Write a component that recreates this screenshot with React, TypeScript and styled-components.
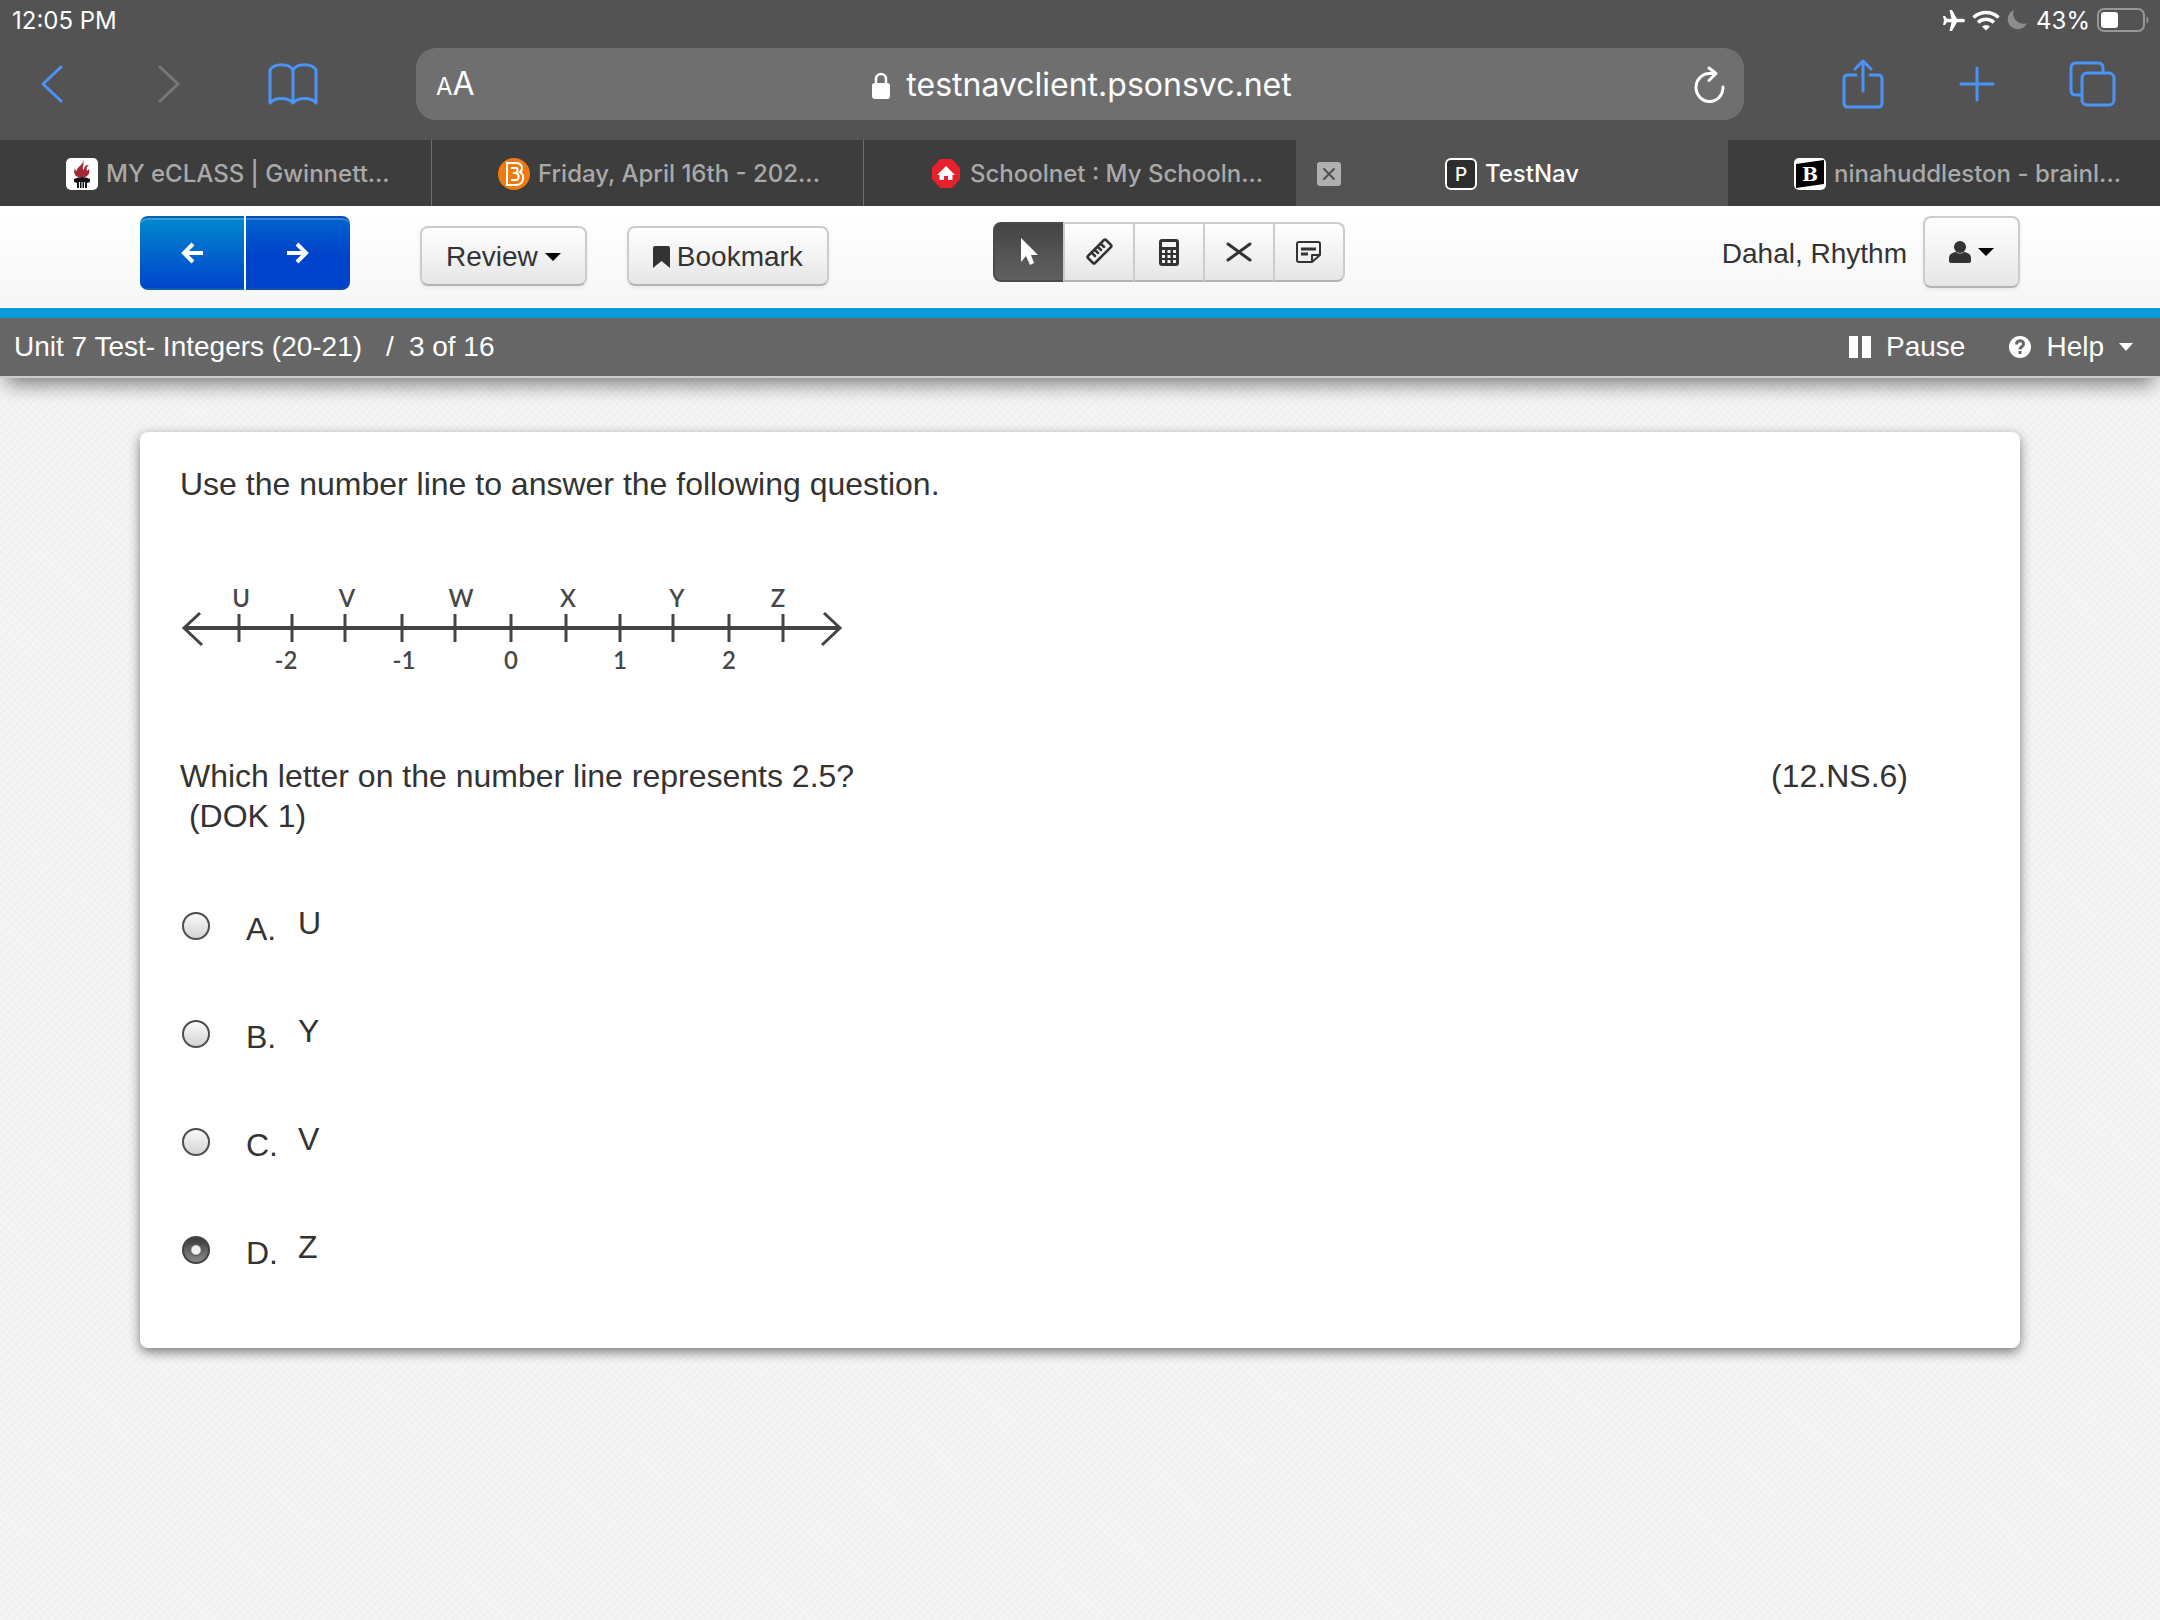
import React from "react";
import styled, { createGlobalStyle, css } from "styled-components";

const sans = `"Liberation Sans", Arial, sans-serif`;
const system = `Inter, "Liberation Sans", sans-serif`;

const GlobalStyle = createGlobalStyle`
  *, *::before, *::after { box-sizing: border-box; }
  body { margin: 0; background: #f5f5f5; font-family: ${sans}; color: #333; }
  button { font: inherit; color: inherit; margin: 0; padding: 0; border: 0; background: none; cursor: pointer; }
  svg { display: block; flex: none; }
`;

const Page = styled.div`
  min-height: 100vh;
  display: flex;
  flex-direction: column;
`;

/* ---------- browser chrome ---------- */

const Chrome = styled.header`
  background: #535353;
  color: #fff;
  font-family: ${system};
`;

const StatusBar = styled.div`
  height: 40px;
  padding: 0 10px 0 12px;
  display: flex;
  align-items: center;
  justify-content: space-between;
  font-size: 24px;
`;

const StatusIcons = styled.div`
  display: flex;
  align-items: center;
  gap: 7px;
`;

const AddressRow = styled.div`
  height: 100px;
  padding-top: 8px;
  display: flex;
  align-items: flex-start;
`;

const ToolSide = styled.div<{ $end?: boolean }>`
  width: 416px;
  height: 72px;
  flex: none;
  display: flex;
  align-items: center;
  justify-content: space-between;
  padding: ${(p) => (p.$end ? "0 44px 0 98px" : "0 98px 0 39px")};
`;

const ChromeButton = styled.button<{ $muted?: boolean }>`
  color: ${(p) => (p.$muted ? "#777" : "#4a94f7")};
`;

const AddressBar = styled.div`
  flex: 1;
  min-width: 0;
  height: 72px;
  padding: 2px 18px 0 20px;
  border-radius: 20px;
  background: #6f6f6f;
  display: grid;
  grid-template-columns: 1fr auto 1fr;
  align-items: center;
`;

const TextSize = styled.button`
  justify-self: start;
  font-size: 32px;
  line-height: 40px;
`;

const SmallA = styled.span`
  font-size: 24px;
`;

const Url = styled.div`
  display: flex;
  align-items: center;
  gap: 16px;
  padding-left: 2px;
  font-size: 32px;
  line-height: 40px;
`;

const Reload = styled.button`
  justify-self: end;
`;

const TabBar = styled.nav`
  display: grid;
  grid-template-columns: repeat(5, 1fr);
  height: 66px;
`;

const Tab = styled.div<{ $active?: boolean; $divider?: boolean }>`
  min-width: 0;
  display: grid;
  grid-template-columns: 66px 1fr ${(p) => (p.$active ? "66px" : "20px")};
  align-items: center;
  padding-top: 2px;
  background: ${(p) => (p.$active ? "#535353" : "#3d3d3d")};
  border-right: ${(p) => (p.$divider ? "1px solid #6e6e6e" : "0")};
`;

const TabLink = styled.a<{ $active?: boolean }>`
  grid-column: 2;
  min-width: 0;
  display: flex;
  align-items: center;
  justify-content: ${(p) => (p.$active ? "center" : "flex-start")};
  gap: 8px;
  color: ${(p) => (p.$active ? "#fff" : "#a9a9a9")};
  font-size: 24px;
  font-weight: 500;
  line-height: 32px;
  white-space: nowrap;
  text-decoration: none;
`;

const CloseTab = styled.button`
  grid-row: 1;
  grid-column: 1;
  margin-left: 21px;
  width: 24px;
  height: 24px;
  border-radius: 3px;
  background: #b0b0b0;
  color: #505050;
  display: grid;
  place-items: center;
`;

/* ---------- test toolbar ---------- */

const TestHeader = styled.div`
  height: 102px;
  padding: 0 140px;
  display: flex;
  align-items: flex-start;
  background: linear-gradient(#fff 0%, #fefefe 20%, #f6f6f6 97%, #fff 98%);
  font-size: 28px;
  line-height: 36px;
`;

const ButtonGroup = styled.div<{ $top: number; $left?: number }>`
  display: flex;
  margin-top: ${(p) => p.$top}px;
  margin-left: ${(p) => p.$left ?? 0}px;
`;

const NavButton = styled.button<{ $next?: boolean }>`
  width: 104px;
  height: 74px;
  display: grid;
  place-items: center;
  color: #fff;
  border: solid ${(p) => (p.$next ? "#0a4fb0" : "#0a62ae")};
  border-width: 2px 0;
  box-shadow: inset 0 2px 0 rgba(255, 255, 255, 0.2);
  ${(p) =>
    p.$next
      ? css`
          margin-left: 2px;
          border-radius: 0 8px 8px 0;
          background: linear-gradient(#0064cd, #04c 50%);
        `
      : css`
          border-radius: 8px 0 0 8px;
          background: linear-gradient(#08c, #04c);
        `}
`;

const raised = css`
  border: 2px solid #ccc;
  border-bottom-color: #b3b3b3;
  background: linear-gradient(#fff, #e6e6e6);
`;

const PlainButton = styled.button<{ $tall?: boolean }>`
  ${raised}
  height: ${(p) => (p.$tall ? 72 : 60)}px;
  padding: ${(p) => (p.$tall ? "0 24px" : "2px 24px 0")};
  border-radius: 8px;
  box-shadow: 0 2px 4px rgba(0, 0, 0, 0.06);
  display: flex;
  align-items: center;
  gap: 7px;
`;

const Tools = styled.div`
  display: flex;
  margin: 16px 0 0 164px;
`;

const ToolButton = styled.button<{ $on?: boolean }>`
  ${raised}
  width: 72px;
  height: 60px;
  margin-right: -2px;
  display: grid;
  place-items: center;
  &:first-child { border-radius: 8px 0 0 8px; }
  &:last-child { border-radius: 0 8px 8px 0; margin-right: 0; }
  ${(p) =>
    p.$on &&
    css`
      background: linear-gradient(#444, #606060);
      border-color: #4a4a4a;
      color: #fff;
    `}
`;

const Account = styled.div`
  margin: 10px 0 0 auto;
  display: flex;
  align-items: center;
  gap: 16px;
`;

const UserName = styled.span`
  padding-top: 4px;
`;

const Caret = styled.span<{ $small?: boolean }>`
  width: 0;
  height: 0;
  border: solid transparent;
  border-width: ${(p) => (p.$small ? "8px 7px 0" : "8px 8px 0")};
  border-top-color: ${(p) => (p.$small ? "#fff" : "#000")};
`;

const InfoBar = styled.div`
  position: relative;
  display: flex;
  align-items: center;
  justify-content: space-between;
  height: 70px;
  padding: 0 27px 0 14px;
  border-top: 10px solid #0b9bdc;
  border-bottom: 2px solid #ccc;
  background: #666;
  color: #fff;
  font-size: 28px;
  line-height: 36px;
  box-shadow: 0 12px 20px -6px rgba(0, 0, 0, 0.5);
`;

const Crumbs = styled.div`
  display: flex;
  gap: 14px;
`;

const Position = styled.span`
  &::before { content: "/"; margin: 0 15px 0 10px; }
`;

const InfoActions = styled.div`
  display: flex;
  gap: 44px;
`;

const InfoButton = styled.button`
  display: flex;
  align-items: center;
  gap: 15px;
`;

/* ---------- question ---------- */

const Canvas = styled.main`
  flex: 1;
  padding: 54px 140px;
  background-color: #f5f5f5;
  background-image:
    repeating-linear-gradient(45deg, rgba(0, 0, 0, 0.01) 0 2px, transparent 2px 5px),
    repeating-linear-gradient(-45deg, rgba(0, 0, 0, 0.01) 0 2px, transparent 2px 6px);
`;

const Card = styled.section`
  padding: 32px 112px 44px 40px;
  border-radius: 8px;
  background: #fff;
  box-shadow: 0 4px 12px rgba(0, 0, 0, 0.5);
  font-size: 32px;
  line-height: 40px;
`;

const Text = styled.p`
  margin: 0;
`;

const Figure = styled.figure`
  margin: 74px 0;
`;

const FigureLabel = styled.text`
  font-family: Lato, "Open Sans", sans-serif;
  font-size: 24px;
  font-weight: 600;
  fill: #484848;
  text-anchor: middle;
`;

const Prompt = styled.div`
  display: flex;
  justify-content: space-between;
  white-space: pre-wrap;
`;

const Options = styled.div`
  margin-top: 36px;
`;

const Option = styled.label`
  height: 108px;
  padding-left: 2px;
  display: grid;
  grid-template-columns: 64px 52px auto;
  align-items: center;
  justify-content: start;
`;

const Radio = styled.input`
  appearance: none;
  width: 28px;
  height: 28px;
  margin: 0;
  border: 2px solid #4d4d4d;
  border-radius: 50%;
  background: linear-gradient(#fafafa, #d4d4d4);
  &:checked {
    border-color: #444;
    background: radial-gradient(circle, #f0f0f0 4px, #333 6px, transparent 6px),
      linear-gradient(#3a3a3a, #8a8a8a);
  }
`;

const OptionKey = styled.span`
  padding-top: 6px;
`;

const OptionText = styled.span`
  padding-bottom: 6px;
`;

/* ---------- drawings ---------- */

const line = { fill: "none", stroke: "currentColor", strokeLinecap: "round", strokeLinejoin: "round" } as const;

const Favicon = ({ kind }: { kind: string }) => (
  <svg width="32" height="32" viewBox="0 0 32 32" aria-hidden="true">
    {kind === "torch" && (
      <>
        <rect width="32" height="32" rx="5" fill="#fff" />
        <path d="M17 2c1 5-7 7-6 11-2-1-2-2-2-3-2 5 0 9 4 9h6c4-1 5-5 4-8l-2 2c-1-3 0-5 2-6-4 0-5 2-5 5-3-2 1-6-1-10z" fill="#a32a35" />
        <path d="M8 21q8-4 16 0v3l-3 1v5h-2l-1-4h-4l-1 4h-2v-5l-3-1z" fill="#151515" />
        <path d="M14 24v6h4v-6z" fill="#151515" />
        <path d="M13.500 24v6M16 24v6M18.500 24v6" stroke="#fff" strokeWidth="1" />
      </>
    )}
    {kind === "blog" && (
      <>
        <circle cx="16" cy="16" r="16" fill="#ef7a12" />
        <path d="M9 5h9c7 0 7 7 4 9 5 3 4 13-4 13H9z" fill="none" stroke="#fff" strokeWidth="2" />
        <path d="M13 10h5c2 0 2 4 0 5h-3M15 15h3c4 1 3 7 0 7h-5" fill="none" stroke="#fff" strokeWidth="2" />
      </>
    )}
    {kind === "home" && (
      <>
        <path d="M10 1h12l8 9v11l-8 9H10l-8-9V10z" fill="#e8202b" />
        <path d="M16 8l9 9h-2.500v5h-4.500v-4h-4v4H9.500v-5H7z" fill="#fff" />
      </>
    )}
    {kind === "p" && (
      <>
        <rect x="1" y="1" width="30" height="30" rx="5" fill="#2d2d2d" stroke="#fff" strokeWidth="2" />
        <text x="16" y="23" textAnchor="middle" fontSize="19" fill="#fff">P</text>
      </>
    )}
    {kind === "b" && (
      <>
        <rect width="32" height="32" rx="5" fill="#fff" />
        <path d="M2 6L30 2v24L2 30z" fill="#000" />
        <text x="16" y="23" textAnchor="middle" fontSize="19" fontWeight="bold" fontFamily="DejaVu Serif, serif" fill="#fff">B</text>
      </>
    )}
  </svg>
);

const letters: [string, number][] = [["U", 61], ["V", 167], ["W", 281], ["X", 388], ["Y", 497], ["Z", 598]];
const numbers: [string, number][] = [["-2", 106], ["-1", 224], ["0", 331], ["1", 440], ["2", 549]];
const ticks = [59, 112, 165, 222, 275, 331, 386, 440, 493, 549, 603];

const NumberLine = () => (
  <svg width="664" height="104" viewBox="0 0 664 104" role="img" aria-label="Number line">
    <g fill="none" stroke="#444" strokeWidth="3">
      <path d="M4 50H660" strokeWidth="4" />
      <path d="M20 35L4 50L22 67M644 35L660 50L642 67" />
      {ticks.map((x) => (
        <path key={x} d={`M${x} 36V64`} />
      ))}
    </g>
    {letters.map(([t, x]) => (
      <FigureLabel key={t} x={x} y={29}>{t}</FigureLabel>
    ))}
    {numbers.map(([t, x]) => (
      <FigureLabel key={t} x={x} y={91}>{t}</FigureLabel>
    ))}
  </svg>
);

const tabs = [
  { icon: "torch", label: "MY eCLASS | Gwinnett...", divider: true },
  { icon: "blog", label: "Friday, April 16th - 202...", divider: true },
  { icon: "home", label: "Schoolnet : My Schooln..." },
  { icon: "p", label: "TestNav", active: true },
  { icon: "b", label: "ninahuddleston - brainl..." },
];

const options = [
  { key: "A.", text: "U" },
  { key: "B.", text: "Y" },
  { key: "C.", text: "V" },
  { key: "D.", text: "Z" },
];

export default function App() {
  return (
    <Page>
      <GlobalStyle />
      <Chrome>
        <StatusBar>
          <span>12:05 PM</span>
          <StatusIcons>
            <svg width="23" height="21" viewBox="0 0 23 21" fill="#fff">
              <path d="M23 10.500c0 1-1 1.800-2 1.800h-6L10 21H7.500l2-8.700H5L3 15H1l1-4.500L1 6h2l2 2.700h4.500L7.500 0H10l5 8.700h6c1 0 2 .800 2 1.800z" />
            </svg>
            <svg width="28" height="21" viewBox="0 0 28 21" fill="none" stroke="#fff" strokeWidth="3.500">
              <path d="M1.500 7.500a18 18 0 0 1 25 0M6 12.500a11.500 11.500 0 0 1 16 0" />
              <path d="M14 20.500l-4-4a6 6 0 0 1 8 0z" fill="#fff" stroke="none" />
            </svg>
            <svg width="22" height="20" viewBox="0 0 22 20" fill="#8c8c8c">
              <path d="M7 0a10 10 0 0 0 13 13A10 10 0 1 1 7 0z" />
            </svg>
            <span>43%</span>
            <svg width="53" height="24" viewBox="0 0 53 24">
              <rect x="1" y="1" width="46" height="22" rx="6" fill="none" stroke="#979797" strokeWidth="2" />
              <rect x="4" y="4" width="17" height="16" rx="3" fill="#fff" />
              <path d="M49.500 8q4 4 0 8z" fill="#979797" />
            </svg>
          </StatusIcons>
        </StatusBar>
        <AddressRow>
          <ToolSide>
            <ChromeButton aria-label="Back">
              <svg width="24" height="40" viewBox="0 0 24 40" {...line} strokeWidth="3"><path d="M22 3L4 20l18 17" /></svg>
            </ChromeButton>
            <ChromeButton aria-label="Forward" $muted>
              <svg width="28" height="40" viewBox="0 0 28 40" {...line} strokeWidth="3"><path d="M8 3l18 17L8 37" /></svg>
            </ChromeButton>
            <ChromeButton aria-label="Bookmarks">
              <svg width="50" height="42" viewBox="0 0 50 42" {...line} strokeWidth="3">
                <path d="M25 40V7C21 0 6 0 2 7v33c5-6 18-6 23 0 5-6 18-6 23 0V7c-4-7-19-7-23 0" />
              </svg>
            </ChromeButton>
          </ToolSide>
          <AddressBar>
            <TextSize aria-label="Page settings"><SmallA>A</SmallA>A</TextSize>
            <Url>
              <svg width="18" height="27" viewBox="0 0 18 27">
                <rect y="11" width="18" height="16" rx="3" fill="#fff" />
                <path d="M4 12V7a5 5 0 0 1 10 0v5" fill="none" stroke="#fff" strokeWidth="2.500" />
              </svg>
              <span>testnavclient.psonsvc.net</span>
            </Url>
            <Reload aria-label="Reload">
              <svg width="32" height="38" viewBox="0 0 32 38" {...line} strokeWidth="3">
                <path d="M29 21A13.500 14 0 1 1 16 7.500h6M15 2l7 5.500-7 7" />
              </svg>
            </Reload>
          </AddressBar>
          <ToolSide $end>
            <ChromeButton aria-label="Share">
              <svg width="42" height="50" viewBox="0 0 42 50" {...line} strokeWidth="3">
                <path d="M14 16H6q-4 0-4 4v24q0 4 4 4h30q4 0 4-4V20q0-4-4-4h-8M21 32V2M13 10l8-8 8 8" />
              </svg>
            </ChromeButton>
            <ChromeButton aria-label="New tab">
              <svg width="36" height="36" viewBox="0 0 36 36" {...line} strokeWidth="3"><path d="M18 2v32M2 18h32" /></svg>
            </ChromeButton>
            <ChromeButton aria-label="All tabs">
              <svg width="47" height="46" viewBox="0 0 47 46" {...line} strokeWidth="3">
                <rect x="13" y="12" width="32" height="32" rx="5" />
                <path d="M12 34H7q-5 0-5-5V7q0-5 5-5h22q5 0 5 5v4" />
              </svg>
            </ChromeButton>
          </ToolSide>
        </AddressRow>
        <TabBar>
          {tabs.map((t) => (
            <Tab key={t.label} $active={t.active} $divider={t.divider}>
              {t.active && (
                <CloseTab aria-label="Close tab">
                  <svg width="14" height="14" viewBox="0 0 14 14" {...line} strokeWidth="2"><path d="M2 2l10 10M12 2L2 12" /></svg>
                </CloseTab>
              )}
              <TabLink href="#" $active={t.active}>
                <Favicon kind={t.icon} />
                {t.label}
              </TabLink>
            </Tab>
          ))}
        </TabBar>
      </Chrome>

      <TestHeader>
        <ButtonGroup $top={10}>
          <NavButton aria-label="Previous question">
            <svg width="22" height="22" viewBox="0 0 22 22" {...line} strokeLinecap="butt" strokeLinejoin="miter" strokeWidth="4"><path d="M12 2l-9 9 9 9M3 11h19" /></svg>
          </NavButton>
          <NavButton aria-label="Next question" $next>
            <svg width="22" height="22" viewBox="0 0 22 22" {...line} strokeLinecap="butt" strokeLinejoin="miter" strokeWidth="4"><path d="M10 2l9 9-9 9M19 11H0" /></svg>
          </NavButton>
        </ButtonGroup>
        <ButtonGroup $top={20} $left={70}>
          <PlainButton>Review<Caret /></PlainButton>
        </ButtonGroup>
        <ButtonGroup $top={20} $left={40}>
          <PlainButton>
            <svg width="17" height="22" viewBox="0 0 17 22" fill="#333"><path d="M0 2q0-2 2-2h13q2 0 2 2v20l-8.500-7L0 22z" /></svg>
            Bookmark
          </PlainButton>
        </ButtonGroup>
        <Tools>
          <ToolButton $on aria-label="Pointer">
            <svg width="18" height="28" viewBox="0 0 18 28" fill="#fff"><path d="M1 0l17 17h-7l3 8-4 2-4-9-5 6z" /></svg>
          </ToolButton>
          <ToolButton aria-label="Ruler">
            <svg width="28" height="28" viewBox="0 0 28 28" {...line} strokeWidth="2.500">
              <path d="M21 2l5 5q1 1 0 2L10 25q-1 1-2 0l-5-5q-1-1 0-2L19 2q1-1 2 0zM7 15l3 3M10 12l3 3M13 9l3 3M16 6l3 3" />
            </svg>
          </ToolButton>
          <ToolButton aria-label="Calculator">
            <svg width="20" height="27" viewBox="0 0 20 27">
              <rect width="20" height="27" rx="3" fill="#333" />
              <path d="M3 3h14v5H3zM3 11h3v3H3zM8.500 11h3v3h-3zM14 11h3v3h-3zM3 16h3v3H3zM8.500 16h3v3h-3zM14 16h3v3h-3zM3 21h3v3H3zM8.500 21h3v3h-3zM14 21h3v3h-3z" fill="#f4f4f4" />
            </svg>
          </ToolButton>
          <ToolButton aria-label="Answer eliminator">
            <svg width="26" height="20" viewBox="0 0 26 20" {...line} strokeWidth="3"><path d="M2 2l22 16M24 2L2 18" /></svg>
          </ToolButton>
          <ToolButton aria-label="Notepad">
            <svg width="27" height="24" viewBox="0 0 27 24" {...line} strokeWidth="2">
              <path d="M4 2h19q2 0 2 2v11l-8 7H4q-2 0-2-2V4q0-2 2-2zM17 22v-7h8" />
              <path d="M6 9h15M6 14h7" strokeWidth="3" strokeLinecap="butt" />
            </svg>
          </ToolButton>
        </Tools>
        <Account>
          <UserName>Dahal, Rhythm</UserName>
          <PlainButton $tall aria-label="Account menu">
            <svg width="22" height="22" viewBox="0 0 22 22" fill="#333">
              <ellipse cx="11" cy="6" rx="6" ry="6" />
              <path d="M0 20v-3q0-5 7-6 4 3 8 0 7 1 7 6v3q0 2-2 2H2q-2 0-2-2z" />
            </svg>
            <Caret />
          </PlainButton>
        </Account>
      </TestHeader>
      <InfoBar>
        <Crumbs>
          <span>Unit 7 Test- Integers (20-21)</span>
          <Position>3 of 16</Position>
        </Crumbs>
        <InfoActions>
          <InfoButton>
            <svg width="22" height="22" viewBox="0 0 22 22" fill="#fff"><path d="M0 0h9v22H0zM13 0h9v22h-9z" /></svg>
            Pause
          </InfoButton>
          <InfoButton>
            <svg width="22" height="22" viewBox="0 0 22 22">
              <circle cx="11" cy="11" r="11" fill="#fff" />
              <path d="M7.500 8.500c0-5 7-5 7-.500 0 3-3.500 2.500-3.500 5.500" fill="none" stroke="#666" strokeWidth="3" />
              <path d="M9.500 15h3v3h-3z" fill="#666" />
            </svg>
            Help
            <Caret $small />
          </InfoButton>
        </InfoActions>
      </InfoBar>

      <Canvas>
        <Card>
          <Text>Use the number line to answer the following question.</Text>
          <Figure><NumberLine /></Figure>
          <Prompt>
            <Text>{"Which letter on the number line represents 2.5?\n (DOK 1)"}</Text>
            <Text>(12.NS.6)</Text>
          </Prompt>
          <Options role="radiogroup" aria-label="Answer choices">
            {options.map((o) => (
              <Option key={o.key}>
                <Radio type="radio" name="answer" defaultChecked={o.key === "D."} />
                <OptionKey>{o.key}</OptionKey>
                <OptionText>{o.text}</OptionText>
              </Option>
            ))}
          </Options>
        </Card>
      </Canvas>
    </Page>
  );
}
